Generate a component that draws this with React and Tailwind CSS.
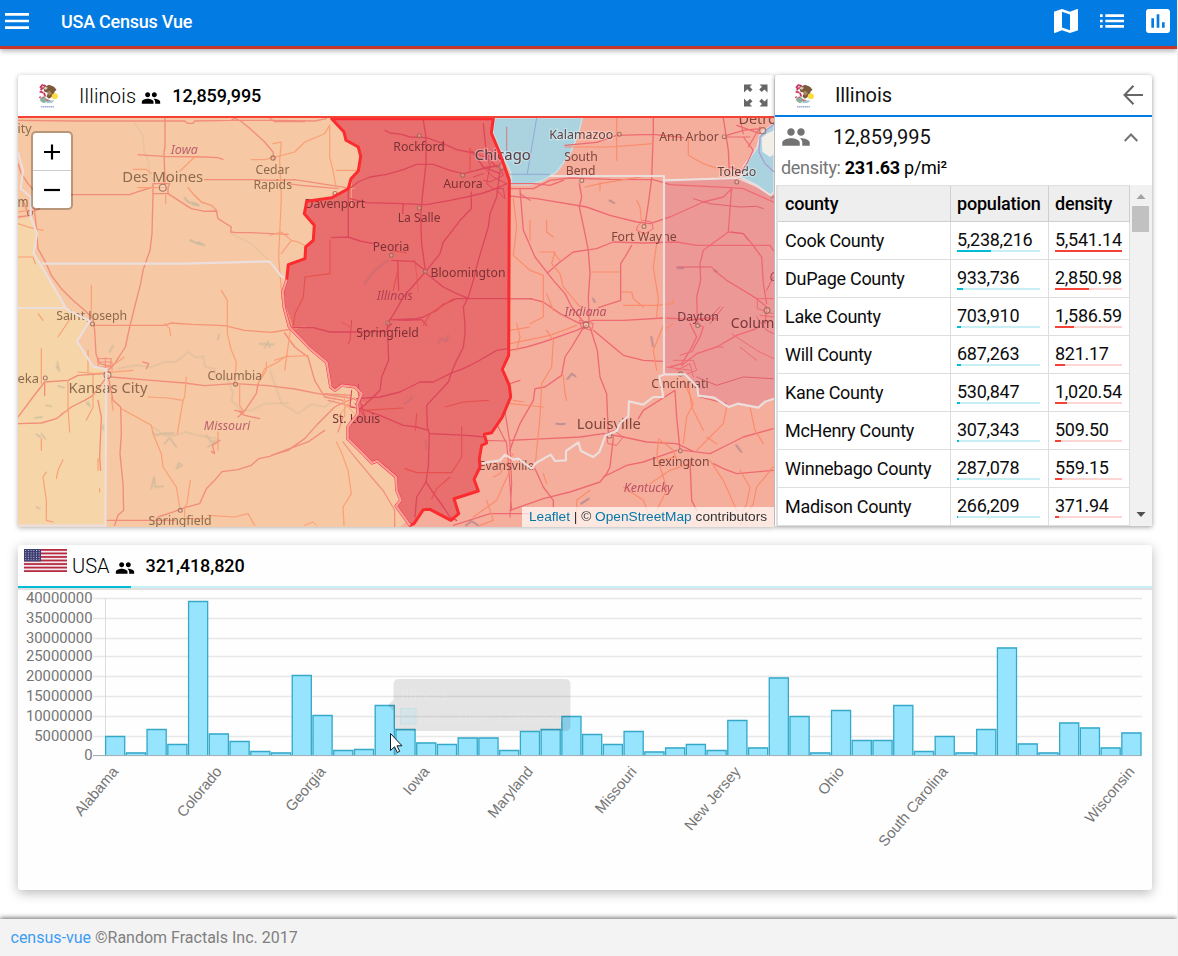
import React from 'react';
import { MdMenu, MdMap, MdList, MdAssessment, MdPeople } from 'react-icons/md';

const counties = [
  ['Cook County', '5,238,216', 41, '5,541.14', 100],
  ['DuPage County', '933,736', 7.2, '2,850.98', 51],
  ['Lake County', '703,910', 5, '1,586.59', 28.5],
  ['Will County', '687,263', 5, '821.17', 15],
  ['Kane County', '530,847', 3.8, '1,020.54', 18],
  ['McHenry County', '307,343', 2.4, '509.50', 9],
  ['Winnebago County', '287,078', 2.4, '559.15', 10],
  ['Madison County', '266,209', 1.4, '371.94', 6],
];

const barTops = [
  736.5, 753, 729.5, 744.5, 601.5, 734, 741.5, 751.5, 753, 675.5, 715.5, 750.5, 749.5, 705.5, 729.5, 743, 744.5,
  738, 738, 750.5, 731.5, 729.5, 716.5, 734.5, 744.5, 731.5, 752, 748, 744.5, 750.5, 720.5, 748, 678, 716.5, 753,
  710.5, 740.5, 740.5, 705.5, 751.5, 736.5, 753, 729.5, 648, 744, 753, 723, 728, 748, 733,
];

const gridLines = [
  ['40000000', 598.5], ['35000000', 618.5], ['30000000', 638.5], ['25000000', 656.5], ['20000000', 676.5],
  ['15000000', 696.5], ['10000000', 716.5], ['5000000', 736.5], ['0', 755.5],
];

const stateLabels = [
  ['Alabama', 0], ['Colorado', 5], ['Georgia', 10], ['Iowa', 15], ['Maryland', 20], ['Missouri', 25],
  ['New Jersey', 30], ['Ohio', 35], ['South Carolina', 40], ['Wisconsin', 49],
];

const BROWN = '#8c6b4e';
const WINE = '#7d3135';
const RUST = '#7e463f';
const PLUM = '#b9606e';

// text, left, baseline, width, size, colour, italic
const places = [
  ['ity', 18, 133, 14, 12.5, BROWN], ['Iowa', 171.3, 154.3, 27, 12, PLUM, true],
  ['Des Moines', 122.7, 182, 81, 14.5, BROWN], ['Cedar', 256, 173.7, 34, 12.3, BROWN],
  ['Rapids', 254, 189, 38.5, 12.3, BROWN], ['m', 18, 206.5, 11, 14.5, BROWN],
  ['Saint Joseph', 56.7, 319.7, 71, 12.3, BROWN], ['eka', 18, 382.7, 21.5, 12.3, BROWN],
  ['Kansas City', 69, 393.3, 79, 14.5, BROWN], ['Columbia', 208, 380, 54.5, 12.3, BROWN],
  ['Missouri', 204.3, 430, 46.5, 12, PLUM, true], ['Springfield', 149, 525, 63, 12.3, BROWN],
  ['Davenport', 305, 208, 60.7, 12.3, WINE], ['Rockford', 393.8, 150.7, 51.5, 12.3, WINE],
  ['Aurora', 443.7, 188.3, 39.6, 12.3, WINE], ['La Salle', 398.3, 221.7, 42.7, 12.3, WINE],
  ['Peoria', 373.3, 250.7, 36.4, 12.3, WINE], ['Bloomington', 431, 277, 75, 12.3, WINE],
  ['Illinois', 377.3, 300, 36, 12, '#b43e54', true], ['Springfield', 356.7, 337.3, 62.7, 12.3, WINE],
  ['St. Louis', 332.7, 423, 48, 12.3, WINE], ['Evansville', 479.3, 470, 55.5, 12.3, RUST],
  ['South', 564.7, 160.7, 33.6, 12.3, RUST], ['Bend', 566.3, 175.3, 29.7, 12.3, RUST],
  ['Ann Arbor', 659.7, 141, 59.6, 12.3, RUST], ['Detroit', 739, 123.7, 47, 14.5, RUST],
  ['Fort Wayne', 611.7, 241.3, 65.5, 12.3, RUST], ['Indiana', 565, 316.3, 42, 12, '#b85165', true],
  ['Dayton', 677.7, 320.7, 41.6, 12.3, '#7a383c'], ['Columbus', 731.3, 328, 68, 14.5, '#7a383c'],
  ['Ohio', 770, 281, 25, 12, '#b03c58', true], ['Cincinnati', 651.7, 387.7, 57.5, 12.3, RUST],
  ['Louisville', 577.3, 429, 64, 14.5, RUST], ['Lexington', 652.7, 465.7, 57.3, 12.3, RUST],
  ['Kentucky', 624.3, 492.3, 49, 12, '#b85165', true],
];

const haloPlaces = [
  ['Chicago', 475.3, 160.3, 56, 14.5, '#5c3b42'], ['Kalamazoo', 549.7, 139, 64, 12.3, '#5f4442'],
  ['Toledo', 718, 176, 38.7, 12.3, '#5f4442'],
];

const dots = [
  [162.8, 187.7, 4], [273, 158, 2.5], [30, 213, 3], [92.5, 324, 2.3], [45.3, 378, 2.3], [107.5, 375, 4],
  [235.5, 384.2, 2.3], [180.3, 510.3, 2.3], [419.3, 135.7, 2.3], [502, 166.5, 3.5], [462.7, 175.3, 2.3],
  [335, 193.5, 2.3], [419.3, 208, 2.3], [391.3, 255.3, 2.3], [425.3, 271.5, 2.3], [387.7, 323, 2.3],
  [619.3, 134.3, 2.3], [581.8, 180.5, 2.3], [724.3, 136.7, 2.3], [762.7, 130.7, 3.6], [736.8, 182, 2.3],
  [644, 226.5, 2.3], [697.7, 325.5, 2.3], [767, 310.5, 3.4], [680.3, 450.7, 2.3], [609.5, 435.5, 3],
  [586, 325, 3.4], [680.5, 374, 2.5],
];

const illinois =
  'M331.7 118.7L344 132L346 140.3L358.3 147L360.7 156.3L358.3 171L351 178.7L348.3 188.7L331.7 197.7L306.7 201.3L304.3 213.7L314.3 225.3L313.3 240.3L305.7 247L305 258.7L288.3 264.7L286.7 279.7L282.7 292L284 307L289.3 327L310 348.7L326.7 362.7L330.7 387L335 390.3L341.7 385.3L355 387L361.7 393.7L357.3 403.7L358 413.7L347.7 427L347.7 438.7L363 453.7L371.7 463L377.3 461L396 477L396.7 490.3L400.7 500.3L396 506L410 525.3L414 523.7L423.3 509.7L430 509.3L451 520.3L458.7 513.7L454 498.7L478.3 491L474 479.3L480 467L479.3 458.7L481.7 445.3L486.7 443L484.3 434.3L491.7 432.7L502.3 417L510.7 397L509.3 385.3L502.3 369.3L508.7 355.3L509.3 180.3L500 153.7L491.3 133L493.3 118.7Z';

function PlaceNames({ items, halo }) {
  return items.map(([text, x, y, w, size, fill, italic], i) => (
    <text
      key={i}
      x={x - 0.5}
      y={y}
      textLength={w}
      lengthAdjust="spacingAndGlyphs"
      fontSize={size}
      fill={fill}
      fontStyle={italic ? 'italic' : 'normal'}
      stroke={halo ? '#ffffff' : 'none'}
      strokeOpacity={halo ? 0.28 : 0}
      strokeWidth={halo ? 2.5 : 0}
      paintOrder="stroke"
    >
      {text}
    </text>
  ));
}

function StateMap() {
  return (
    <svg className="block h-[409px] w-[756px]" viewBox="18 118 756 409" style={{ fontFamily: '"Noto Sans", sans-serif' }}>
      <rect x="18" y="118" width="756" height="409" fill="#f6c8a3" />
      <path d="M493 118H774V527H400L480 460L509 355V180Z" fill="#f6ae9c" />
      <g transform="translate(18 117) scale(.33333)">
        <path d="M0 310L38 300L57 350L47 410L75 455L110 515L145 575L180 595L215 612L177 673L225 748L265 757L262 1230H0Z" fill="#f6d6a9" />
        <g transform="translate(1476 0)">
          <path d="M-45 3L-52 45L-20 120L2 165L5 203L60 203L100 190L140 165L180 110L205 50L217 3Z" fill="#aad3df" stroke="#c9dfe2" strokeWidth="5" />
          <path d="M80 3L52 170M0 172H120" fill="none" stroke="#8f9fcf" strokeWidth="2.5" />
          <path d="M462 190L680 183L740 208L792 235V845L765 855L745 873L683 860L656 870L612 842L565 835L560 810L525 772H462Z" fill="#ec9896" />
          <path d="M792 20L762 42L750 55L742 90L700 150L690 180L740 205L782 235L792 225Z" fill="#aad3df" stroke="#e7dfe2" strokeWidth="5" />
          <path d="M755 62L770 50L792 40V112L780 120L757 104Z" fill="#f2efe9" />
          <path d="M792 22L765 42L750 60L747 105L765 140L792 165" fill="none" stroke="#a9a0d4" strokeWidth="4" />
        </g>
      </g>
      <path d={illinois} fill="#e96f6e" />

      <g transform="translate(18 117) scale(.33333)" fill="none" strokeLinejoin="round" strokeLinecap="round">
        {/* waterways */}
        <g stroke="#c5b79c" strokeWidth="4" opacity=".7">
          <path d="M350 20L375 55L378 100L392 135L395 180L410 190M640 350L700 380L755 432" opacity=".4" />
          <path d="M500 243L512 256L530 258L542 265L524 262M518 370L535 378L558 384L540 376" strokeWidth="7" />
          <path d="M300 755L350 745L400 750L440 735L470 735L490 722L510 705L535 722L555 717L562 750L590 755L592 780L630 790L645 830L640 850L670 880L700 880L740 860L810 858M405 930L440 955L475 955L500 945L540 955L570 960L595 965" opacity=".65" />
          <path d="M118 735L124 762L115 748M120 807L138 812M205 858L216 868L210 855M85 865L100 868M50 903L72 900M55 952L68 960M70 950L82 966M405 945L412 955L430 950L468 948M440 980L455 962L475 990M565 955L580 975L605 970M570 990L590 975M475 1055L482 1038L492 1045L480 1052M400 1115L408 1080L412 1110L435 1108M725 680L768 682M740 692L750 674L755 690M275 705L285 685M600 668L603 652M55 1170L65 1175M255 925V938" strokeWidth="5" />
          <path d="M756 760L790 858L840 890L880 862L920 870L945 852L960 830" opacity=".6" />
          <path d="M1160 860L1175 850L1182 840M1223 970L1225 995M1260 680L1268 665L1285 672L1290 655M1040 500L1070 460L1110 430" stroke="#b06a77" strokeWidth="6" opacity=".6" />
          <path d="M1980 454H1996M2088 460L2096 464M1648 786L1662 770L1672 778M1615 920L1630 922L1640 920M1775 250L1788 258M2155 985L2170 1005M2260 242L2268 240M1900 660L1905 688M1725 545L1730 555M1690 1160L1712 1145M1345 1225L1360 1212L1380 1225" stroke="#a7818b" strokeWidth="6" />
        </g>

        {/* Iowa, Missouri and the plains: trunk roads */}
        <g stroke="#f28d79" strokeWidth="4">
          <path d="M0 10L170 12H500L508 19H525L530 12L640 10L760 10L890 12L925 5M640 10L650 3L672 15L700 38L740 75L765 105L768 128" />
          <path d="M441 3V90L438 105L441 200M360 113L390 115L440 118L560 120L600 122L615 127" />
          <path d="M60 240L100 233L335 233L360 224L405 210M450 212L455 200H405V230H450V212M560 188H700L770 190L830 188L985 212L1010 215" />
          <path d="M405 230L402 350L396 400L375 460L368 500L355 550L335 630L322 690L290 740L270 760" />
          <path d="M450 230L500 262L520 275L560 283L595 282L600 305L640 330L638 345L655 347L700 347L760 350L810 352" />
          <path d="M510 212L525 230L550 255L580 265L598 283" stroke="#f79a77" />
          <path d="M0 140L10 170L30 200L60 235L48 270L55 330L60 395L85 440L100 475L130 515L165 550L200 580L225 605L230 640L234 710L245 740L280 748" />
          <path d="M240 725H280L275 750H242ZM245 735H282V760M262 722V755" strokeWidth="3" />
          <path d="M225 625H380L440 625L460 618L520 622L620 626L680 640L760 646L860 630" stroke="#f69477" />
          <path d="M280 780L400 790L500 798L560 806L650 800L750 806L830 816L900 830L1000 843L1040 860" />
          <path d="M0 920L70 918L115 905L160 870L200 850L225 835L270 775M0 900L45 840L80 795L150 790L180 775L260 770M80 800V835" />
          <path d="M270 775L285 850L308 870L310 950L306 1010L315 1100L317 1180L300 1195L290 1225M268 1210H470M420 1200L460 1187L500 1172L545 1160L565 1115L590 1090L612 1064L660 1058L700 1045L722 1025L755 1018L800 1000L870 975L920 940" />
          <path d="M240 850L250 900L245 1020L248 1060" /><path d="M720 800L715 830L678 885L650 880M678 885L660 900M665 885L680 895L725 905M375 735L392 740L385 755M580 1003L590 1010L583 985L605 970" />
          <path d="M1010 843L980 855L950 870L900 920L860 965L810 1000L760 1015M800 648L830 690L870 720L890 790L920 840L975 850M810 200L850 205L960 215" />
          <path d="M975 975L1010 1020L1060 1080L1095 1120L1130 1180V1230M930 850L1010 870M920 830L1000 835M960 945L975 900M755 3L770 14H860" strokeWidth="3.5" />
          <path d="M0 300L38 295M15 250L30 290L65 275" />
        </g>
        {/* Iowa, Missouri and the plains: secondary roads */}
        <g stroke="#fa9f76" strokeWidth="3.5">
          <path d="M486 162L530 120M440 212H360M345 157H385L400 170M443 235V260M765 80L790 75L785 130L790 245L785 350L782 420L790 520L800 545M700 128L740 128L830 105L860 75L920 50L935 25" />
          <path d="M0 320L30 330L50 335L75 340M0 285L30 280M0 420H45L52 440M220 505V600M610 520L628 550V650L640 700L655 735L650 800M440 620L455 635L458 655M745 735V760L720 800L740 755L780 735L800 720L870 715M665 800V865L678 885" />
          <path d="M505 780L500 840L495 850L478 950M390 840L450 843L495 850M310 875L400 925L405 950L430 1010L435 1050L475 1110L485 1170M517 1090L507 1160L500 1170L500 1200" />
          <path d="M70 695V800M150 790V870L155 945M225 775V870L205 910M70 965V1000M85 1065L75 1080L85 1150V1210L105 1215M135 1028L120 1060L115 1085M160 600L120 660M245 1115V1125" />
          <path d="M280 840L285 880M180 765L230 770L345 760M290 740L320 720M210 700V765M240 1025V1060M150 880L130 890M570 1195L650 1200L690 1190L710 1225M500 1205H560M600 945V1000M955 975L970 1005L990 1060L1000 1130L975 1170L978 1225M60 590L75 610" />
          <path d="M935 25V120L945 160L955 215M955 160H1020M1000 190V270M756 355L790 345L820 370L840 375L870 390M820 370L790 410M790 540L820 620L800 760M770 730L800 720L810 715" />
          <path d="M970 850L1010 890M980 830V900M1000 850L960 900M860 1225L885 1215L895 1225" strokeWidth="3" />
        </g>

        {/* Illinois roads */}
        <g transform="translate(756 0)" stroke="#dc475b" strokeWidth="4">
          <path d="M345 40L360 48L395 52L420 60L470 62L520 80L560 98L610 108L640 150L690 170M460 10L468 60V140L458 230L452 300L455 380L466 460M235 217L265 195L300 180L350 172L400 158L440 142H490L540 160L580 170L640 155L690 145" />
          <path d="M235 215V360L185 362M235 360L270 372L310 380M240 245L290 257L400 260L470 263L540 250L590 240L640 228L690 210L710 200M400 260L398 290M604 225V275L570 310L540 350L520 375L510 410L470 460" />
          <path d="M640 20L650 120L680 150M690 160L680 240L660 290L655 330L640 380L625 430L610 490L595 540L580 570L585 620L585 650L580 690L560 730L545 765L535 795L470 865L472 930L478 950L475 1050L468 1095L440 1140L435 1200M466 465L400 540L372 590L352 620L356 730L335 780L330 820L300 850L270 875" />
          <path d="M470 470L520 510L560 530L590 542M365 430L430 433L465 460M383 433L386 520M785 545H560L520 562L500 580L460 600L440 605L370 608M70 632H130L180 645L240 645L350 643M365 620L350 635M260 845L330 840L390 825L450 795L490 795L540 770L580 755L620 735L680 700L716 695M270 875L330 895L400 925L440 930L475 940M480 950L590 955L645 960M468 1095L495 1135L520 1170L540 1200L560 1210M360 608L410 610L455 608L470 625" />
          <path d="M620 160L650 150L690 145L700 175L660 195L640 190M610 180L640 170M670 100L650 120L660 145L650 200L670 215L700 215M640 150L670 180L710 200M600 100L640 120L670 118M680 220L705 245L700 215" strokeWidth="3" />
          <path d="M245 610L240 670L235 680M255 860L285 900L265 830L265 802M245 820L240 870L270 875" strokeWidth="3" />
        </g>
        <g transform="translate(756 0)" stroke="#e6514f" strokeWidth="3.5">
          <path d="M180 370V470L105 480L100 540L75 590L70 625M365 400L410 408M550 545L480 590L460 625M405 1055L440 1067H545L575 1020V930M525 870L580 855L655 850M280 880L400 873M440 890L436 940M540 1080L500 1115L485 1145M600 92V160M385 450L370 520" />
          <path d="M435 430L445 520M215 615L240 630M710 30V100" opacity=".6" />
        </g>

        {/* eastern trunk roads */}
        <g transform="translate(1476 0)" stroke="#ee6a72" strokeWidth="4">
          <path d="M0 215L70 215L120 190L180 183L300 187L430 188L480 203L660 212L700 215L790 255M0 200H75L120 205L160 190M165 85L260 76L320 55L430 52L520 62M430 3V40L425 185L415 260L405 325M640 3L655 100L658 170" />
          <path d="M30 215L40 340L75 420L130 490L165 530L185 570L220 615M208 200L215 240L208 270L225 350L235 400L240 470L235 540L237 610M0 237L80 245L230 270L300 295L380 315L420 320L480 300L580 255L640 240L665 215L662 250L655 345L580 400L570 440L572 490L560 540L563 620" />
          <path d="M0 545H60L100 555L150 590L210 620L250 610L340 610L460 603L560 608L620 605M365 385L345 420L332 440V550L265 572M112 468L150 435L190 405L260 395L310 375L400 378L500 375L560 385L780 385L790 400" />
          <path d="M0 700L50 690L100 675L200 640L230 625L215 640L185 690L165 720L155 775L105 810L75 815L70 850L30 920L10 970L0 1000M250 640L340 715L400 730L460 733M240 630L262 700L270 780L290 830L295 950" />
          <path d="M0 970L110 965L210 960L280 950L340 960L410 975L500 980L550 1003M310 960L300 1050L290 1070L270 1095L180 1125L100 1145L0 1180M75 1055L100 1110L130 1150L130 1170" />
          <path d="M280 1080L350 1045L400 1035L500 1000M495 820L500 900L510 1000M495 820L440 855L400 880L385 905M520 1000L600 1010L640 990L700 960L790 935M610 1040L640 1055L680 1070L790 1060M540 1030L545 1150L560 1180" />
          <path d="M540 620L560 660L540 700L515 740L480 750M515 745L560 710L620 690L680 655L740 635M560 620L580 630L570 660L545 705M612 460L650 490L700 520L740 545L770 570M770 575L765 620M655 345L700 350L725 380L755 420L760 500L770 560" />
          <path d="M510 715L540 705M490 730H550L560 760L520 775M500 760L540 740L550 780M470 750L540 760M740 545H790M742 545V575L790 590M750 595L792 600M665 650L740 700L770 715L792 725M690 690L740 730M620 690H640" strokeWidth="3" />
          <path d="M385 325L400 310L425 315L430 335L405 350L380 340ZM210 610L250 620L245 640L215 632ZM290 950L310 940L340 960L320 985L295 980Z" strokeWidth="3" />
          <path d="M650 55L700 40L750 35M680 25L750 50M690 3L700 50M645 60L720 60M700 60L730 100L710 140L690 170M750 30L715 90M660 150L690 160" strokeWidth="3.5" />
          <path d="M0 800L30 790M-20 850L0 980L5 1100L0 1200M-170 1225L-60 1190L60 1190M-80 970L-10 972M-50 900L-10 980L-5 1030L5 1180M30 230L60 250" strokeWidth="3.5" />
        </g>
        {/* eastern secondary roads */}
        <g transform="translate(1476 0)" stroke="#fa8c6c" strokeWidth="3.5">
          <path d="M320 3V130M165 90H300L430 80M535 60V115L580 140L640 160M420 175L270 200L225 210M270 195V220M60 310V370M110 310V345L130 360M10 245L20 330L10 415L60 460L100 475V600L60 620" />
          <path d="M90 405H135L125 440L150 470L160 510L210 570M335 525H365L370 545L400 570M245 465H330M440 380L430 450L445 545L440 600M380 250L390 270L395 315M340 565H440L490 560V545M130 405L150 430" />
          <path d="M0 680L120 655L200 625M110 640L130 670L125 750L95 800L90 900L75 1050M0 860L100 870M160 775L165 830L170 850M470 600L430 700L440 760M460 640L490 620M520 790L550 860L530 900L520 980M445 970L440 1020L460 1080L470 1120L440 1180M445 965L490 1000L500 1030" />
          <path d="M535 800L545 870L580 940M720 870L735 940L760 980M650 870L640 920L600 960L560 1000M690 1060L720 1110L710 1160L690 1200M540 1040L480 1060L420 1100M600 1030L640 1090L680 1180M590 960L620 980M340 1110L400 1150L420 1200M500 1020L450 1030M790 1050L740 1110L730 1160L690 1225" />
          <path d="M10 1010L-30 1070L-50 1080M20 700L30 660L20 620M0 640L60 630M10 850L40 855M100 1070L110 1100M240 1120L200 1150V1225M110 530L130 580M-90 1225L-50 1210L-70 1150M-110 1200L-40 1150L0 1060" />
        </g>
        <g transform="translate(1476 0)" stroke="#e2606f" strokeWidth="3">
          <path d="M550 245L600 260L690 270L740 268L760 275M500 450H605L620 465M665 345L700 350L715 370M560 780L620 805L700 780L790 785M545 610L600 600L630 570M570 840L650 860" />
          <path d="M600 620L640 570M770 520L790 480M740 600L770 640L790 650" />
        </g>
      </g>

      <g fill="#ffffff" fillOpacity=".2" stroke="#9b6a55" strokeOpacity=".85" strokeWidth="1.1">
        {dots.map(([x, y, r], i) => (
          <circle key={i} cx={x} cy={y} r={r * 0.85} />
        ))}
      </g>
      <PlaceNames items={places} />
      <PlaceNames items={haloPlaces} halo />

      <g transform="translate(18 117) scale(.33333)" fill="none" stroke="#ecdedd" strokeWidth="6.5" strokeLinejoin="round">
        <path d="M0 105L15 160L8 215L38 240V300L57 350L47 410L75 455L110 515L145 575L180 595L215 612L177 673L225 748L265 757L262 1226H0" />
        <path d="M70 440H500L755 433L790 478L805 485M0 573H145" />
        <g transform="translate(1476 0)">
          <path d="M120 177H462V770M462 190L680 183" />
          <path d="M-85 1040L-65 1035L-30 1030L-15 1013L10 1028L25 1025L65 1055L78 1038L122 1013L135 1032L168 1030V1002L205 976L213 1002L250 1020L268 1005L287 955L320 942L330 918L355 898L357 853L400 863L430 840H460L448 778L465 772H525L562 810L565 836L612 842L656 870L683 860L745 872L765 854L792 845" />
          <path d="M720 160L680 183L740 208L782 235L792 225" strokeWidth="4" />
        </g>
      </g>
      <path d={illinois} fill="none" stroke="#fb2b2f" strokeWidth="3" strokeLinejoin="round" />
      <path
        d="M286.7 279.7L282.7 292L284 307L289.3 327L310 348.7L326.7 362.7L330.7 387L335 390.3L341.7 385.3L355 387L361.7 393.7L357.3 403.7L358 413.7L347.7 427L347.7 438.7L363 453.7L371.7 463L377.3 461L396 477L396.7 490.3L400.7 500.3L396 506L410 525.3"
        fill="none" stroke="#f3a3a0" strokeWidth="2.2" strokeLinejoin="round"
      />
    </svg>
  );
}

function Seal() {
  return (
    <svg className="h-[27px] w-[24px] shrink-0" viewBox="0 0 24 27">
      <g transform="translate(0 .8)">
        <path d="M4 5L6.500 2L9 3L8 5L5.500 6L4.500 9L8 10L9 13L6 16L3.500 14" fill="none" stroke="#c7365f" strokeWidth="1.800" strokeDasharray="4 .6" />
        <path d="M9 4L13 2L18 4L20.500 7L18.500 9L17.500 13L13 16L10.500 14L12 10L8.500 9L7.500 6Z" fill="#7b5a3c" />
        <path d="M9 4L7.500 6L10 7L12 5Z" fill="#d9cfc0" />
        <path d="M11 9L14 8L16 11L13 13Z" fill="#a88760" />
        <circle cx="18.800" cy="13.500" r="3" fill="#fbdc3e" />
        <path d="M4 16L9 14L12 18L8 20.500L4.500 18.500Z" fill="#8fae9b" />
        <path d="M10 16L15 18L12 20Z" fill="#d6536f" />
        <path d="M12 18L18.500 17.500L16 20L10 20.500Z" fill="#9cc5d0" />
        <path d="M5 24H18" stroke="#9fb0d8" strokeWidth="1.400" strokeDasharray="1.600 .4" />
      </g>
    </svg>
  );
}

function Flag() {
  const stripes = Array.from({ length: 7 }, (_, i) => i);
  return (
    <svg className="h-[23px] w-[43px] shrink-0" viewBox="0 0 43 23">
      <rect width="43" height="23" fill="#f3e9ec" />
      {stripes.map((i) => (
        <rect key={i} y={i * 3.54} width="43" height="1.77" fill="#b6293f" />
      ))}
      <rect width="17" height="12.4" fill="#3f3f74" />
      {[1.5, 3.8, 6.1, 8.4, 10.7].map((y) => (
        <path key={y} d={`M1.2 ${y}H16.5`} stroke="#c9c9dc" strokeWidth=".9" strokeDasharray="1 1.7" />
      ))}
    </svg>
  );
}

function Chart() {
  const step = 20.74;
  return (
    <svg className="block h-[300px] w-[1134px]" viewBox="18 590 1134 300" style={{ fontFamily: '"Liberation Sans", Arial, sans-serif' }}>
      {gridLines.map(([label, y]) => (
        <g key={label}>
          <path d={`M93 ${y}H1142`} stroke={label === '0' ? '#b9b9b9' : '#e8e8e8'} strokeWidth={label === '0' ? 1.2 : 1.4} />
          <text x="92.500" y={y + 4.5} textAnchor="end" fontFamily="Roboto, sans-serif" fontSize="14.800" fill="#757575">{label}</text>
        </g>
      ))}
      <path d="M105.500 598V756" stroke="#dcdcdc" strokeWidth="1" />
      {barTops.map((top, i) => (
        <g key={i}>
          <rect x={105.2 + i * step} y={top - 0.5} width="19.800" height={756 - top} fill="#97e4fe" />
          <path
            d={`M${105.6 + i * step} 755.5V${top}H${124.7 + i * step}V755.5`}
            fill="none" stroke="#36a8c8" strokeWidth="1.300"
          />
        </g>
      ))}
      <path d="M93 755.600H1142" stroke="#9fb0b6" strokeWidth="1" />
      {stateLabels.map(([name, i]) => {
        const x = 119 + i * step;
        return (
          <text
            key={name} x={x} y="772" textAnchor="end" fontSize="14.900" fill="#757575"
            transform={`rotate(-50 ${x} 772)`}
          >
            {name}
          </text>
        );
      })}
      <path d="M399 679H565Q570.500 679 570.500 684.500V725.500Q570.500 731 565 731H399Q393.500 731 393.500 725.500V711L388 705.500L393.500 699.500V684.500Q393.500 679 399 679Z" fill="#000" fillOpacity=".1" />
      <rect x="400.500" y="708.500" width="15.500" height="15.500" fill="#97e4fe" fillOpacity=".18" stroke="#bfdde4" strokeOpacity=".7" />
      <g fill="#fff" fillOpacity=".13" fontSize="15">
        <text x="401" y="700" fontWeight="700" textLength="47" lengthAdjust="spacingAndGlyphs">Illinois</text>
        <text x="419" y="722.500" textLength="144" lengthAdjust="spacingAndGlyphs">population: 12859995</text>
      </g>
      <path d="M390.500 733.500V750.500L394.500 746.800L397.300 752.500L399.700 751.300L397 745.800H402Z" fill="#fff" stroke="#111827" strokeWidth="1" />
    </svg>
  );
}

export default function App() {
  return (
    <div className="flex h-[956px] w-[1178px] flex-col overflow-hidden border-r border-[#f1f1f1] bg-white font-['Roboto',sans-serif] text-black">
      <header className="z-10 flex h-[49px] shrink-0 items-center border-b-[3px] border-[#c9372c] bg-[#027be3] pr-px pl-px text-white shadow-[0_2px_5px_rgba(0,0,0,0.3)]">
        <MdMenu className="mb-1 size-8 shrink-0" />
        <h1 className="mb-[3px] ml-[28px] flex-1 text-[18px] font-medium tracking-[-0.25px]">USA Census Vue</h1>
        <div className="mb-1 flex gap-[14px] pr-[2px]">
          <MdMap className="size-8" />
          <MdList className="size-8" />
          <MdAssessment className="size-8" />
        </div>
      </header>

      <main className="flex flex-1 flex-col gap-[19px] pt-[26px] pl-[18px]">
        <div className="flex h-[451px] w-[1134px] gap-px">
          <section className="flex h-[452px] w-[756px] flex-col overflow-hidden rounded-t-[3px] bg-white shadow-[0_1px_5px_rgba(0,0,0,0.3)]">
            <div className="flex h-[43px] shrink-0 items-center border-b-2 border-[#f44336] pl-[18px]">
              <Seal />
              <span className="ml-[19px] text-[20px] leading-none font-light tracking-[0.2px]">Illinois</span>
              <MdPeople className="mt-1 ml-[5px] size-5" />
              <span className="ml-[11px] flex-1 text-[18px] font-medium tracking-[-0.1px]">12,859,995</span>
              <svg className="mr-[6.500px] size-[24px]" viewBox="0 0 24 24" fill="#666">
                <path d="M0 .5H8L5.700 2.800L8.500 5.600L6.100 8L3.300 5.200L0 8.500ZM23.500 .5V8.500L20.500 5.400L17.700 8L15.200 5.600L18 2.800L15.500 .5ZM0 22.500V14.500L3 17.500L6 14.700L8.500 17.200L5.700 20L8 22.500ZM23.500 22.500H15.500L18 20L15.200 17.200L17.700 14.700L20.500 17.500L23.500 14.500Z" />
              </svg>
            </div>
            <div className="relative h-[409px]">
              <StateMap />
              <div className="absolute top-[13px] left-[13px] flex h-[79px] w-[42px] flex-col rounded-[5px] border-2 border-black/25 bg-white bg-clip-padding">
                <div className="flex h-[38px] items-center justify-center border-b border-[#ccc]">
                  <svg className="size-4" viewBox="0 0 16 16"><path d="M0 8H16M8 .5V15.500" stroke="#000" strokeWidth="2.200" /></svg>
                </div>
                <div className="flex flex-1 items-center justify-center">
                  <svg className="size-4" viewBox="0 0 16 16"><path d="M0 8H16" stroke="#000" strokeWidth="2.200" /></svg>
                </div>
              </div>
              <div className="absolute right-0 bottom-0 flex h-[20px] w-[252px] items-center justify-center bg-white/70 font-['Liberation_Sans',Arial,sans-serif] text-[13.700px] whitespace-pre text-[#333]">
                <span className="text-[#0078a8]">Leaflet</span> | © <span className="text-[#0078a8]">OpenStreetMap</span> contributors
              </div>
            </div>
          </section>

          <section className="flex w-[377px] flex-col overflow-hidden rounded-t-[3px] bg-white shadow-[0_1px_5px_rgba(0,0,0,0.4)]">
            <div className="flex h-[42px] shrink-0 items-center border-b-2 border-[#027be3] pl-[17px]">
              <Seal />
              <span className="ml-[19px] flex-1 text-[20px] leading-none tracking-[-0.1px] text-[#111]">Illinois</span>
              <svg className="mr-[9px] size-[20px]" viewBox="0 0 20 20" fill="none" stroke="#666" strokeWidth="2">
                <path d="M20 10H1.500M10.500 .8L1.500 10L10.500 19.200" />
              </svg>
            </div>
            <div className="flex h-[40px] shrink-0 items-center pl-[5.500px]">
              <MdPeople className="size-[30px] text-[#737373]" />
              <span className="ml-[22.500px] flex-1 text-[20px] text-[#111]">12,859,995</span>
              <svg className="mr-[14px] h-[9px] w-[14px]" viewBox="0 0 14 9" fill="none" stroke="#737373" strokeWidth="2">
                <path d="M.7 8L7 1.500L13.300 8" />
              </svg>
            </div>
            <p className="h-[28px] shrink-0 pl-[6px] text-[18px] leading-[22px] tracking-[-0.3px]">
              <span className="text-[#757575]">density:</span> <b className="font-bold">231.63</b> p/mi²
            </p>
            <div className="flex min-h-0 flex-1 pl-[1px]">
              <div className="flex w-[354px] flex-col border-l-2 border-[#e0e0e0] text-[18px] tracking-[-0.28px]">
                <div className="grid h-[37px] shrink-0 grid-cols-[173px_98px_81px] border-b border-[#cfcfcf] border-t border-t-[#e0e0e0] bg-[#eee] leading-[35px] font-medium tracking-[-0.2px]">
                  <div className="border-r border-[#cfcfcf] pl-[7px]">county</div>
                  <div className="border-r border-[#cfcfcf] pl-[6px]">population</div>
                  <div className="border-r border-[#cfcfcf] pl-[6px]">density</div>
                </div>
                <div className="flex min-h-0 flex-1 flex-col overflow-hidden">
                  {counties.map(([name, pop, popShare, density, densityShare]) => (
                    <div key={name} className="grid h-[38px] shrink-0 grid-cols-[173px_98px_81px] border-b border-[#dedede] text-[#0c0c0c]">
                      <div className="border-r border-[#dedede] pl-[7px] leading-[37px]">{name}</div>
                      <div className="flex flex-col border-r border-[#dedede] pl-[6px] leading-[35px]">
                        <span className="h-[28px]">{pop}</span>
                        <div className="h-[2px] w-[83px] bg-[#c8eff4]">
                          <div className="h-full bg-[#00bcd4]" style={{ width: `${popShare}%` }} />
                        </div>
                      </div>
                      <div className="flex flex-col border-r border-[#dedede] pl-[6px] leading-[35px]">
                        <span className="h-[28px]">{density}</span>
                        <div className="h-[2px] w-[67px] bg-[#fdd5d2]">
                          <div className="h-full bg-[#f44336]" style={{ width: `${densityShare}%` }} />
                        </div>
                      </div>
                    </div>
                  ))}
                </div>
              </div>
              <div className="flex flex-1 flex-col items-center justify-between bg-[#f1f1f1] pr-px pb-[9px]">
                <div className="flex w-full flex-col items-center">
                  <svg className="mt-[9px] h-[5px] w-[10px]" viewBox="0 0 10 5"><path d="M.5 5L5 0L9.500 5Z" fill="#a3a3a3" /></svg>
                  <div className="mt-[7px] h-[26px] w-[17px] bg-[#c1c1c1]" />
                </div>
                <svg className="h-[5px] w-[10px]" viewBox="0 0 10 5"><path d="M.5 0L5 5L9.500 0Z" fill="#505050" /></svg>
              </div>
            </div>
          </section>
        </div>

        <section className="flex h-[345px] w-[1134px] flex-col overflow-hidden rounded-[3px] bg-[#fefefe] shadow-[0_3px_12px_rgba(0,0,0,0.28)]">
          <div className="flex h-[41px] shrink-0 items-center pl-[6px]">
            <div className="mb-[10px]"><Flag /></div>
            <span className="ml-[5px] text-[20px] font-light">USA</span>
            <MdPeople className="mt-1 ml-[5px] size-5" />
            <span className="ml-[11px] text-[18px] font-medium tracking-[-0.1px]">321,418,820</span>
          </div>
          <div className="h-[2px] shrink-0 bg-[#c8eff4]"><div className="h-full w-[113px] bg-[#00bcd4]" /></div>
          <div className="h-[2px] shrink-0 bg-[#e0e0e0]" />
          <Chart />
        </section>
      </main>

      <footer className="z-10 flex h-[37px] shrink-0 items-center bg-[#f3f3f3] pl-[10.500px] text-[16px] whitespace-pre text-[#7f7f7f] shadow-[0_-1px_5px_rgba(0,0,0,0.6)]">
        <span className="text-[#3c9cf5]">census-vue</span> ©Random Fractals Inc. 2017
      </footer>
    </div>
  );
}
